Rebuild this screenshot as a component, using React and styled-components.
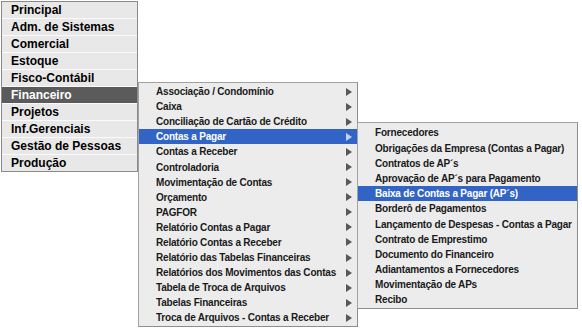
import React from 'react'
import styled, { createGlobalStyle } from 'styled-components'

const mainItems = [
  'Principal',
  'Adm. de Sistemas',
  'Comercial',
  'Estoque',
  'Fisco-Contábil',
  'Financeiro',
  'Projetos',
  'Inf.Gerenciais',
  'Gestão de Pessoas',
  'Produção',
]

const financeiroItems = [
  'Associação / Condomínio',
  'Caixa',
  'Conciliação de Cartão de Crédito',
  'Contas a Pagar',
  'Contas a Receber',
  'Controladoria',
  'Movimentação de Contas',
  'Orçamento',
  'PAGFOR',
  'Relatório Contas a Pagar',
  'Relatório Contas a Receber',
  'Relatório das Tabelas Financeiras',
  'Relatórios dos Movimentos das Contas',
  'Tabela de Troca de Arquivos',
  'Tabelas Financeiras',
  'Troca de Arquivos - Contas a Receber',
]

const contasPagarItems = [
  'Fornecedores',
  'Obrigações da Empresa (Contas a Pagar)',
  'Contratos de AP´s',
  'Aprovação de AP´s para Pagamento',
  'Baixa de Contas a Pagar (AP´s)',
  'Borderô de Pagamentos',
  'Lançamento de Despesas - Contas a Pagar',
  'Contrato de Emprestimo',
  'Documento do Financeiro',
  'Adiantamentos a Fornecedores',
  'Movimentação de APs',
  'Recibo',
]

const Arrow = () => (
  <ArrowIcon width="6" height="8" viewBox="0 0 6 8">
    <path d="M0 0 L6 4 L0 8 Z" fill="currentColor" />
  </ArrowIcon>
)

const ContasPagarMenu = () => (
  <SubMenu $width={221} $top={-7} $pad={2}>
    {contasPagarItems.map((item) => (
      <SubItem key={item} $row={15.2} $active={item === 'Baixa de Contas a Pagar (AP´s)'}>
        <Label>{item}</Label>
      </SubItem>
    ))}
  </SubMenu>
)

const FinanceiroMenu = () => (
  <SubMenu $width={220} $top={-5} $offset={1} $pad={1}>
    {financeiroItems.map((item) => {
      const active = item === 'Contas a Pagar'
      return (
        <SubItem key={item} $row={15.1} $active={active}>
          <Label>{item}</Label>
          <Arrow />
          {active && <ContasPagarMenu />}
        </SubItem>
      )
    })}
  </SubMenu>
)

const App = () => {
  return (
    <Page>
      <GlobalStyle />
      <MainMenu>
        {mainItems.map((item) => {
          const active = item === 'Financeiro'
          return (
            <MainItem key={item} $active={active}>
              {item}
              {active && <FinanceiroMenu />}
            </MainItem>
          )
        })}
      </MainMenu>
    </Page>
  )
}

// styled components
const GlobalStyle = createGlobalStyle`
  body {
    margin: 0;
    background: #fff;
    font-family: "Liberation Sans", Arial, sans-serif;
  }
`
const Page = styled.div`
  padding: 1px 0 0 1px;
  height: 328px;
`
const MainMenu = styled.ul`
  list-style: none;
  margin: 0;
  padding: 0;
  box-sizing: border-box;
  width: 137px;
  display: flex;
  flex-direction: column;
  gap: 1px;
  background: #fafafa;
  border: 1px solid #8a8a8a;
`
const MainItem = styled.li`
  position: relative;
  height: 16px;
  line-height: 17px;
  padding-left: 9px;
  font-size: 12px;
  font-weight: bold;
  white-space: nowrap;
  color: ${(p) => (p.$active ? '#fff' : '#000')};
  background: ${(p) => (p.$active ? '#5b5b5b' : '#e8e8e8')};
`
const SubMenu = styled.ul`
  position: absolute;
  top: ${(p) => p.$top}px;
  left: calc(100% + ${(p) => p.$offset || 0}px);
  z-index: 2;
  list-style: none;
  margin: 0;
  padding: ${(p) => p.$pad}px 0 0;
  box-sizing: border-box;
  width: ${(p) => p.$width}px;
  background: #ececec;
  border: 1px solid #a2a2a2;
  border-right-color: #8e8e8e;
  border-bottom-color: #8e8e8e;
`
const SubItem = styled.li`
  position: relative;
  display: flex;
  align-items: center;
  height: ${(p) => p.$row}px;
  padding: 0 5px 0 17px;
  font-size: 10px;
  font-weight: bold;
  letter-spacing: -0.2px;
  white-space: nowrap;
  color: ${(p) => (p.$active ? '#fff' : '#1a1a1a')};
  background: ${(p) => (p.$active ? '#3164c5' : 'transparent')};
`
const Label = styled.span`
  flex: 1;
  line-height: 1;
  padding-top: 1px;
`
const ArrowIcon = styled.svg`
  flex: none;
  color: inherit;
  opacity: 0.7;
`

export default App
